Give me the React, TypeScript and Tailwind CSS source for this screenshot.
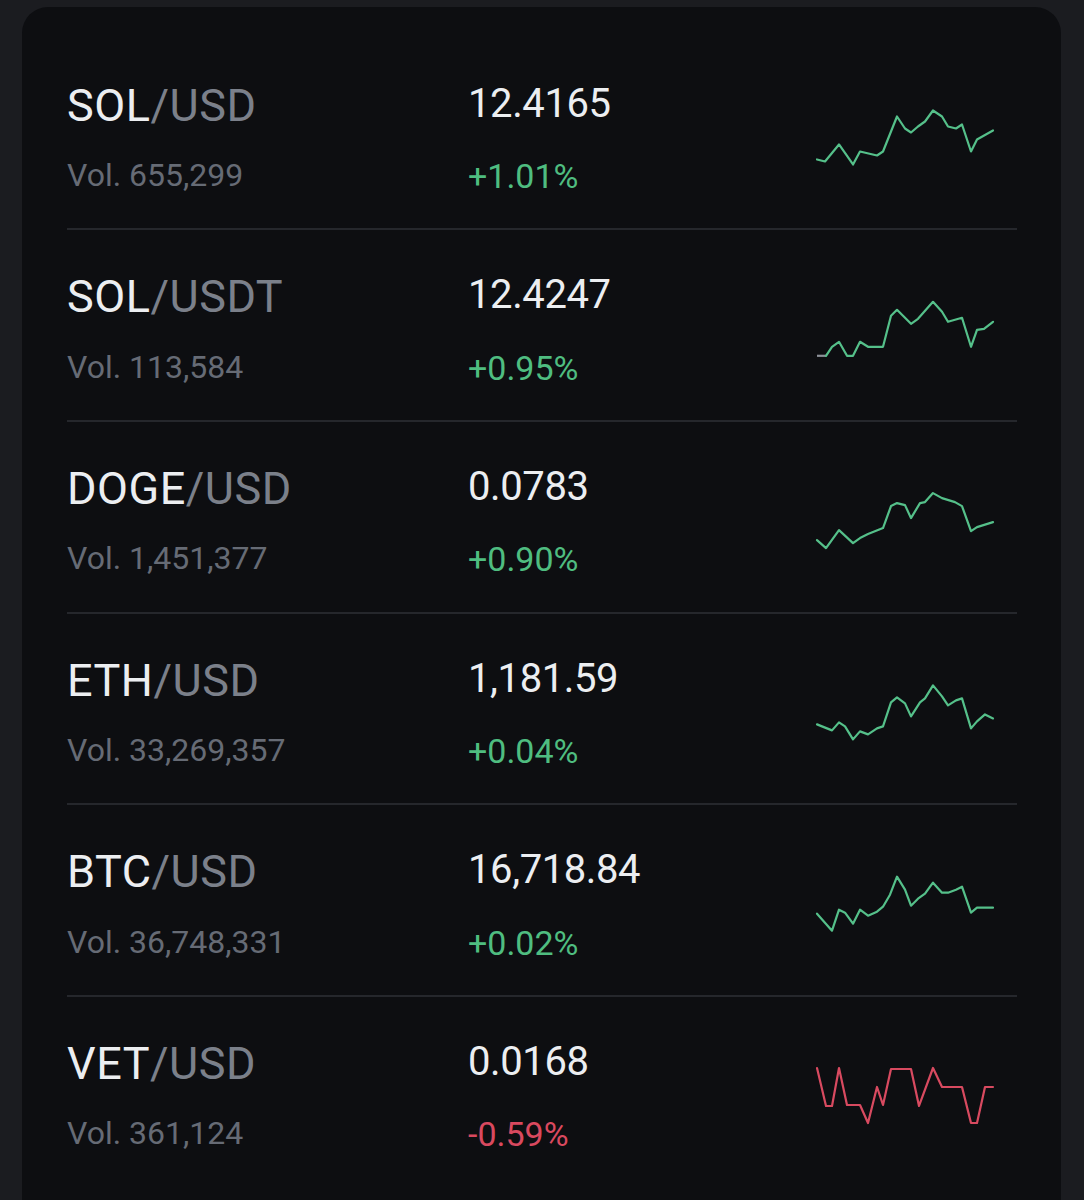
import React from "react";

type Row = {
  base: string;
  quote: string;
  vol: string;
  price: string;
  change: string;
  up: boolean;
  pts: [number, number][];
  gray?: number;
};

const rows: Row[] = [
  {
    base: "SOL",
    quote: "/USD",
    vol: "Vol. 655,299",
    price: "12.4165",
    change: "+1.01%",
    up: true,
    pts: [
      [817, 159], [825, 161], [839, 144], [853, 164], [860, 151], [877, 155], [883, 151],
      [897, 116], [905, 128], [911, 132], [918, 126], [925, 121], [933, 110], [942, 116],
      [948, 126], [956, 128], [962, 124], [971, 151], [977, 139], [993, 130],
    ],
  },
  {
    base: "SOL",
    quote: "/USDT",
    vol: "Vol. 113,584",
    price: "12.4247",
    change: "+0.95%",
    up: true,
    gray: 1,
    pts: [
      [817, 356], [826, 356], [832, 347], [839, 342], [847, 356], [853, 356], [860, 342],
      [868, 347], [883, 347], [891, 316], [897, 310], [911, 324], [918, 319], [933, 302],
      [942, 312], [948, 322], [962, 318], [971, 347], [977, 330], [984, 329], [993, 322],
    ],
  },
  {
    base: "DOGE",
    quote: "/USD",
    vol: "Vol. 1,451,377",
    price: "0.0783",
    change: "+0.90%",
    up: true,
    pts: [
      [817, 540], [826, 548], [839, 530], [853, 543], [860, 538], [868, 534], [883, 528],
      [891, 506], [897, 503], [905, 505], [911, 518], [920, 503], [925, 502], [933, 493],
      [942, 498], [955, 502], [962, 506], [971, 531], [977, 527], [993, 522],
    ],
  },
  {
    base: "ETH",
    quote: "/USD",
    vol: "Vol. 33,269,357",
    price: "1,181.59",
    change: "+0.04%",
    up: true,
    pts: [
      [817, 724], [832, 730], [839, 722], [845, 726], [853, 739], [860, 731], [868, 734],
      [877, 728], [883, 726], [891, 702], [897, 697], [905, 703], [911, 716], [920, 702],
      [925, 698], [933, 685], [942, 696], [948, 705], [956, 700], [962, 698], [971, 728],
      [977, 721], [985, 714], [993, 718],
    ],
  },
  {
    base: "BTC",
    quote: "/USD",
    vol: "Vol. 36,748,331",
    price: "16,718.84",
    change: "+0.02%",
    up: true,
    pts: [
      [817, 914], [832, 931], [839, 910], [845, 913], [853, 924], [860, 910], [868, 916],
      [877, 912], [883, 907], [890, 895], [897, 877], [905, 890], [911, 906], [918, 899],
      [925, 894], [933, 883], [942, 893], [948, 893], [956, 890], [962, 887], [971, 913],
      [977, 908], [993, 908],
    ],
  },
  {
    base: "VET",
    quote: "/USD",
    vol: "Vol. 361,124",
    price: "0.0168",
    change: "-0.59%",
    up: false,
    pts: [
      [817, 1068], [826, 1106], [832, 1106], [839, 1068], [847, 1105], [860, 1105],
      [868, 1123], [877, 1087], [883, 1105], [891, 1069], [911, 1069], [919, 1106],
      [933, 1068], [942, 1087], [962, 1087], [971, 1123], [977, 1123], [985, 1087],
      [993, 1087],
    ],
  },
];

const ROW_H = 191.7;
const FIRST_TOP = 38.5;

function Spark({ row, i }: { row: Row; i: number }) {
  const top = FIRST_TOP + ROW_H * i;
  const rel = row.pts.map(([x, y]) => [x - 812, y - top] as [number, number]);
  const color = row.up ? "#55c08a" : "#d84a60";
  const g = row.gray ?? 0;
  const main = rel.slice(g);
  const grayPts = g > 0 ? rel.slice(0, g + 1) : [];
  return (
    <svg width={205} height={ROW_H} viewBox={`0 0 205 ${ROW_H}`} className="block">
      {grayPts.length > 0 && (
        <polyline
          points={grayPts.map((p) => p.join(",")).join(" ")}
          fill="none"
          stroke="#8d9199"
          strokeWidth={2.2}
          strokeLinejoin="round"
        />
      )}
      <polyline
        points={main.map((p) => p.join(",")).join(" ")}
        fill="none"
        stroke={color}
        strokeWidth={2.2}
        strokeLinejoin="round"
        strokeLinecap="round"
      />
    </svg>
  );
}

export default function App() {
  return (
    <div
      className="min-h-[1200px] w-full bg-[#1b1c20] pt-[7px] overflow-hidden"
      style={{ fontFamily: "Roboto, 'Liberation Sans', sans-serif" }}
    >
      <div className="ml-[22px] w-[1039px] min-h-[1193px] rounded-t-[26px] bg-[#0d0e11] pt-[31.5px] pl-[45px] pr-[44px]">
        {rows.map((r, i) => (
          <div
            key={i}
            className="flex h-[191.7px] border-b border-[#25272c] box-border"
            style={{ borderBottomWidth: i === rows.length - 1 ? 0 : 2 }}
          >
            <div className="w-[401px] flex flex-col pt-[44px]">
              <div className="h-[76.5px] text-[45px] leading-none tracking-[0.5px]">
                <span className="text-[#eceef1]">{r.base}</span>
                <span className="text-[#7b808a]">{r.quote}</span>
              </div>
              <div className="text-[32px] leading-none text-[#666b75]">{r.vol}</div>
            </div>
            <div className="w-[344px] flex flex-col pt-[44px]">
              <div className="h-[76.5px] pt-[1px] text-[40px] leading-none tracking-[-0.4px] text-[#eceef1]">
                {r.price}
              </div>
              <div
                className={
                  "text-[34px] leading-none " + (r.up ? "text-[#4fbd80]" : "text-[#d9495f]")
                }
              >
                {r.change}
              </div>
            </div>
            <div className="w-[205px]">
              <Spark row={r} i={i} />
            </div>
          </div>
        ))}
      </div>
    </div>
  );
}
